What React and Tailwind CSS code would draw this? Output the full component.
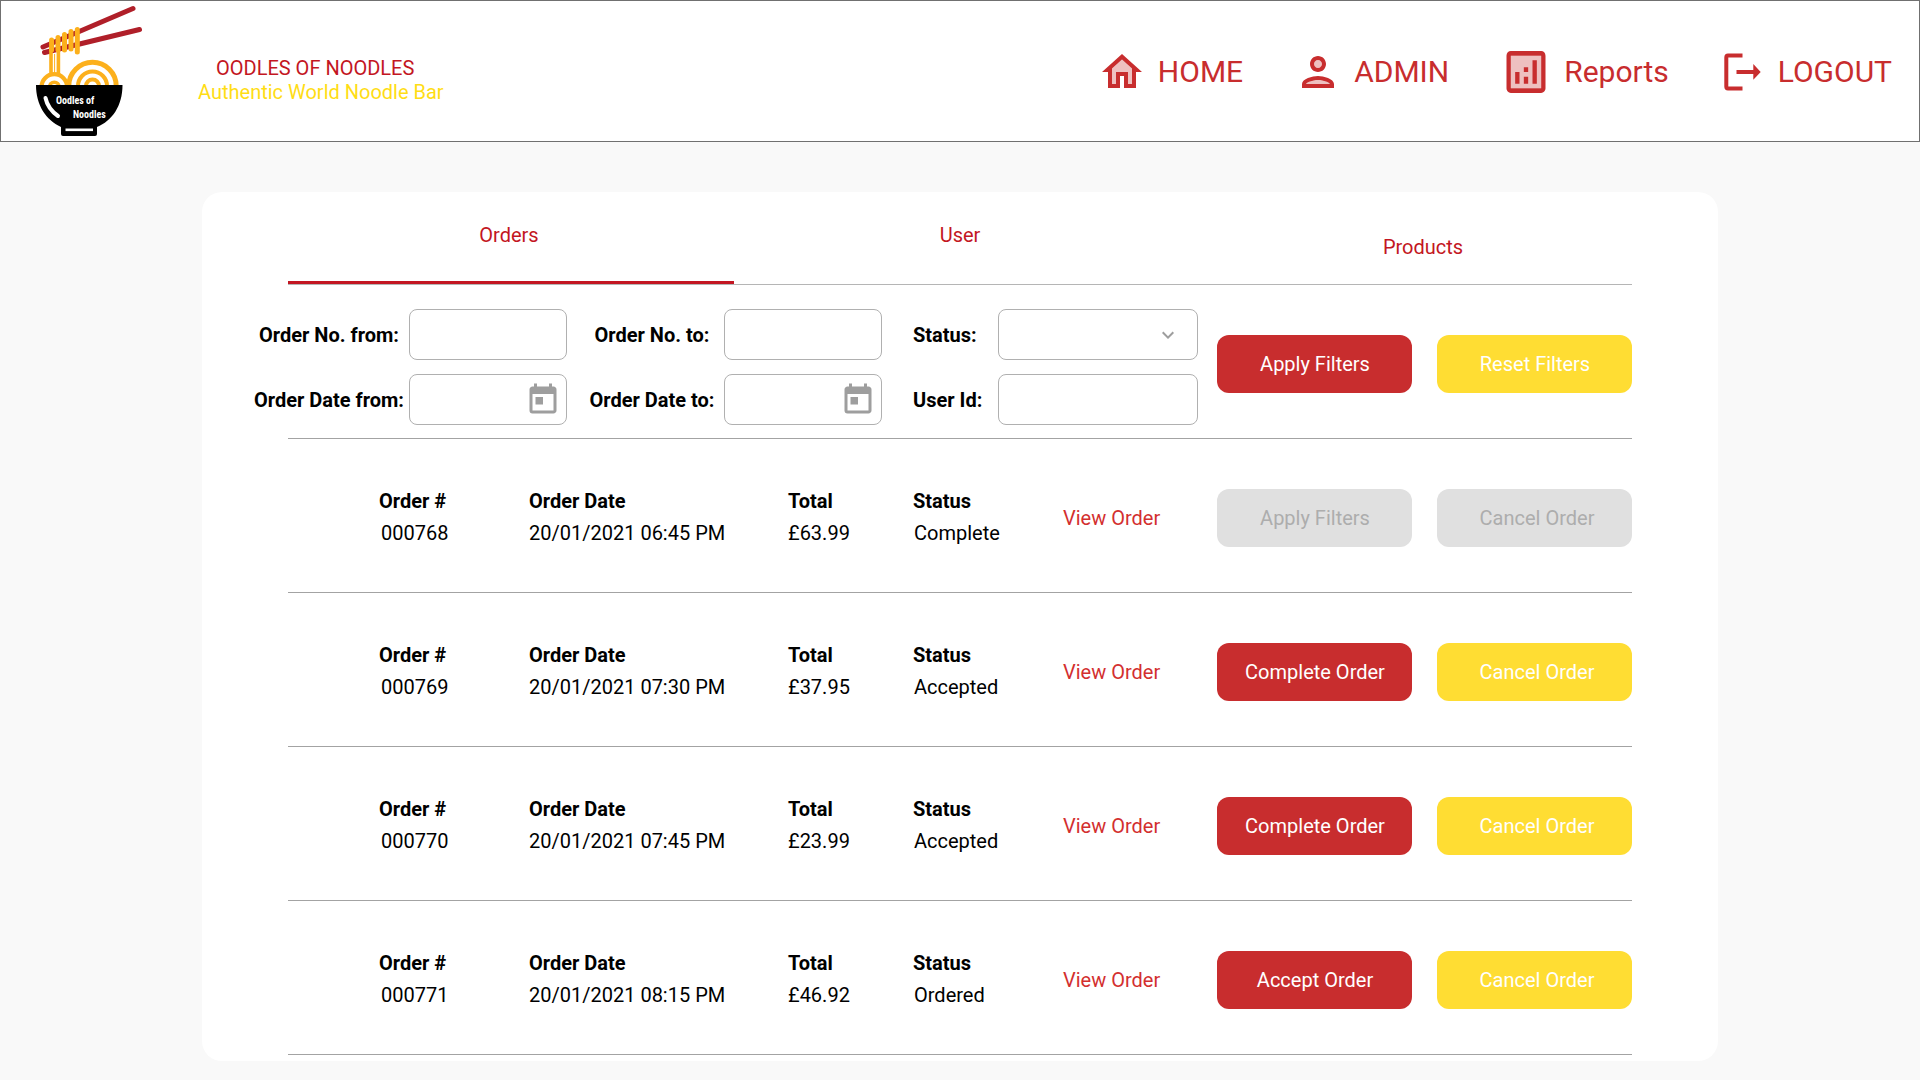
import { MdToday, MdExpandMore } from "react-icons/md";

const orders = [
  { id: "000768", date: "20/01/2021 06:45 PM", total: "£63.99", status: "Complete", action: "Apply Filters", done: true },
  { id: "000769", date: "20/01/2021 07:30 PM", total: "£37.95", status: "Accepted", action: "Complete Order" },
  { id: "000770", date: "20/01/2021 07:45 PM", total: "£23.99", status: "Accepted", action: "Complete Order" },
  { id: "000771", date: "20/01/2021 08:15 PM", total: "£46.92", status: "Ordered", action: "Accept Order" },
];

function Logo() {
  return (
    <svg viewBox="34 4 110 134" className="h-[134px] w-[110px] shrink-0" role="img" aria-label="Oodles of Noodles">
      <g stroke="#b01f29" strokeWidth="5" strokeLinecap="round">
        <path d="M43 47 133 8.500" />
        <path d="M44.500 52.500 139.500 29.500" />
      </g>
      <g fill="none" stroke="#fcb01c">
        <circle cx="92.500" cy="86" r="23.700" strokeWidth="5" />
        <circle cx="92.500" cy="86" r="14.500" strokeWidth="4" />
        <circle cx="92.500" cy="86" r="6.500" strokeWidth="4" />
        <circle cx="54.300" cy="87" r="12.800" fill="#fff" strokeWidth="4.200" />
        <circle cx="54.300" cy="87" r="4.800" strokeWidth="3.600" />
        <path strokeWidth="5" strokeLinecap="round" d="M51.600 40V50M58 37.500V50M64.500 34.500V50M71 31.500V49M77.300 29.500V52" />
        <path strokeWidth="3.600" d="M51 48V75M58.400 48V75" />
        <path strokeWidth="1" d="M54.600 54V74" />
      </g>
      <path d="M36 85H122.500C122.500 106 112 121 97 127V134Q97 136 95 136H63Q61 136 61 134V127C46 120 36 105 36 85Z" />
      <path d="M45.500 98C47 105 51 111 58 116" fill="none" stroke="#fff" strokeWidth="4" strokeLinecap="round" />
      <path d="M65.500 129.800H93" stroke="#fff" strokeWidth="2.600" />
      <g fill="#fff" fontFamily="'Roboto Condensed', Roboto, sans-serif" fontSize="10" fontWeight="700">
        <text x="56" y="104">Oodles of</text>
        <text x="73" y="118">Noodles</text>
      </g>
    </svg>
  );
}

function HomeIcon() {
  return (
    <svg viewBox="0 0 24 24" fill="currentColor" className="size-12" aria-hidden="true">
      <path opacity=".3" d="M7 10.190V18h2v-6h6v6h2v-7.810l-5-4.500z" />
      <path d="M12 3 2 12h3v8h6v-6h2v6h6v-8h3L12 3zm5 15h-2v-6H9v6H7v-7.810l5-4.500 5 4.500V18z" />
    </svg>
  );
}

function PersonIcon() {
  return (
    <svg viewBox="0 0 24 24" fill="currentColor" className="size-12" aria-hidden="true">
      <path opacity=".3" d="M12 16c-2.690 0-5.770 1.280-6 2h12c-.2-.71-3.300-2-6-2z" />
      <circle opacity=".3" cx="12" cy="8" r="2" />
      <path d="M12 14c-2.670 0-8 1.340-8 4v2h16v-2c0-2.660-5.330-4-8-4zm-6 4c.22-.72 3.310-2 6-2 2.700 0 5.800 1.290 6 2H6zm6-6c2.210 0 4-1.790 4-4s-1.790-4-4-4-4 1.790-4 4 1.790 4 4 4zm0-6c1.100 0 2 .9 2 2s-.9 2-2 2-2-.9-2-2 .9-2 2-2z" />
    </svg>
  );
}

function ReportsIcon() {
  return (
    <svg viewBox="0 0 24 24" fill="currentColor" preserveAspectRatio="none" className="h-14 w-[52px]" aria-hidden="true">
      <path opacity=".3" d="M5 5h14v14H5z" />
      <path d="M19 3H5c-1.100 0-2 .9-2 2v14c0 1.100.9 2 2 2h14c1.100 0 2-.9 2-2V5c0-1.100-.9-2-2-2zm0 16H5V5h14v14zM7 12h2v5H7zM15 7h2v10h-2zM11 14h2v3h-2zM11 10h2v2h-2z" />
    </svg>
  );
}

function LogoutIcon() {
  return (
    <svg viewBox="0 0 46 44" fill="currentColor" className="h-11 w-[46px]" aria-hidden="true">
      <path d="M22.500 3.500H8Q4.300 3.500 4.300 7.500V36.500Q4.300 40.500 8 40.500H22.500V36.500H8.300V7.500H22.500Z" />
      <path d="M16.500 20H33.300V14L40.700 22 33.300 29.700V24H16.500Z" />
    </svg>
  );
}

function NavLink({ icon, children }) {
  return (
    <a href="#" className="flex items-center gap-3 text-[30px] leading-9">
      {icon}
      {children}
    </a>
  );
}

const box = "h-[51px] w-full rounded-lg border border-[#b0b0b0] bg-white px-3";

function Field({ id, label, left, date, select }) {
  return (
    <div className="flex items-center">
      <label htmlFor={id} className={left ? "w-[85px] shrink-0 font-bold" : "grow text-center font-bold whitespace-nowrap"}>
        {label}
      </label>
      <div className={left ? "relative min-w-0 grow" : "relative w-[158px]"}>
        {select ? (
          <select id={id} className={`${box} appearance-none`} defaultValue="">
            <option value=""></option>
            <option>Ordered</option>
            <option>Accepted</option>
            <option>Complete</option>
          </select>
        ) : (
          <input id={id} type="text" className={box} />
        )}
        {date && <MdToday className="pointer-events-none absolute top-2 right-1.5 size-9 text-[#9e9e9e]" />}
        {select && <MdExpandMore className="pointer-events-none absolute top-3.5 right-[18px] size-6 text-[#9e9e9e]" />}
      </div>
    </div>
  );
}

const tones = {
  red: "bg-[#c82d2e] text-white",
  yellow: "bg-[#ffdd33] text-white",
  muted: "bg-[#e0e0e0] text-[#adadad]",
};

function Button({ tone, disabled, children }) {
  return (
    <button type="button" disabled={disabled} className={`h-[58px] w-[195px] rounded-xl pl-px whitespace-nowrap ${tones[tone]}`}>
      {children}
    </button>
  );
}

function Cell({ title, children }) {
  return (
    <div className="whitespace-nowrap">
      <dt className="font-bold">{title}</dt>
      <dd>{children}</dd>
    </div>
  );
}

function OrderRow({ order }) {
  return (
    <li className="flex h-[154px] items-center border-b border-[#a3a3a3] pt-1 pl-[91px]">
      <dl className="grid grow grid-cols-[150fr_259fr_125fr_150fr] pb-0.5 leading-8">
        <Cell title="Order #">
          <span className="pl-0.5">{order.id}</span>
        </Cell>
        <Cell title="Order Date">{order.date}</Cell>
        <Cell title="Total">{order.total}</Cell>
        <Cell title="Status">
          <span className="pl-px">{order.status}</span>
        </Cell>
      </dl>
      <a href="#" className="w-[154px] shrink-0 text-[#d32f2f]">
        View Order
      </a>
      <div className="flex shrink-0 gap-[25px]">
        <Button tone={order.done ? "muted" : "red"} disabled={order.done}>
          {order.action}
        </Button>
        <Button tone={order.done ? "muted" : "yellow"} disabled={order.done}>
          <span className="pl-1">Cancel Order</span>
        </Button>
      </div>
    </li>
  );
}

export default function App() {
  return (
    <div className="min-h-screen bg-[#f9f9f9] pb-[19px] font-['Roboto',sans-serif] text-xl leading-6 text-black">
      <header className="flex h-[142px] items-center justify-between border border-[#707070] bg-white pr-[27px] pl-[33px]">
        <div className="flex items-center">
          <Logo />
          <div className="ml-[54px] pt-[18px]">
            <p className="pl-[18px] text-[#c31622]">OODLES OF NOODLES</p>
            <p className="text-[#ffdd15]">Authentic World Noodle Bar</p>
          </div>
        </div>
        <nav className="flex items-center gap-[51px] pt-0.5 text-[#c82d2e]">
          <NavLink icon={<HomeIcon />}>HOME</NavLink>
          <NavLink icon={<PersonIcon />}>ADMIN</NavLink>
          <NavLink icon={<ReportsIcon />}>Reports</NavLink>
          <NavLink icon={<LogoutIcon />}>LOGOUT</NavLink>
        </nav>
      </header>

      <main className="mx-[202px] mt-[50px] rounded-[20px] bg-white pb-1.5">
        <div role="tablist" className="mx-[86px] grid h-[93px] grid-cols-[446fr_452fr_446fr] border-b border-[#b5b5b5] text-[#c31622]">
          <button type="button" role="tab" aria-selected="true" className="border-b-[3px] border-[#c31622] pr-1 pb-[3px]">
            Orders
          </button>
          <button type="button" role="tab" aria-selected="false" className="pb-1.5">
            User
          </button>
          <button type="button" role="tab" aria-selected="false" className="pt-[18px] pl-7">
            Products
          </button>
        </div>

        <form className="mr-[86px] ml-[47px] grid grid-cols-[318fr_315fr_316fr_434px]">
          <div className="flex flex-col gap-3.5 pt-6 pb-[13px]">
            <Field id="no-from" label="Order No. from:" />
            <Field id="date-from" label="Order Date from:" date />
          </div>
          <div className="flex flex-col gap-3.5 pt-6 pl-[13px]">
            <Field id="no-to" label="Order No. to:" />
            <Field id="date-to" label="Order Date to:" date />
          </div>
          <div className="flex flex-col gap-3.5 pt-6 pl-[31px]">
            <Field id="status" label="Status:" left select />
            <Field id="user-id" label="User Id:" left />
          </div>
          <div className="flex items-center justify-end gap-[25px] pt-1">
            <Button tone="red">Apply Filters</Button>
            <Button tone="yellow">Reset Filters</Button>
          </div>
        </form>

        <ul className="mx-[86px] border-t border-[#a3a3a3]">
          {orders.map((order) => (
            <OrderRow key={order.id} order={order} />
          ))}
        </ul>
      </main>
    </div>
  );
}
